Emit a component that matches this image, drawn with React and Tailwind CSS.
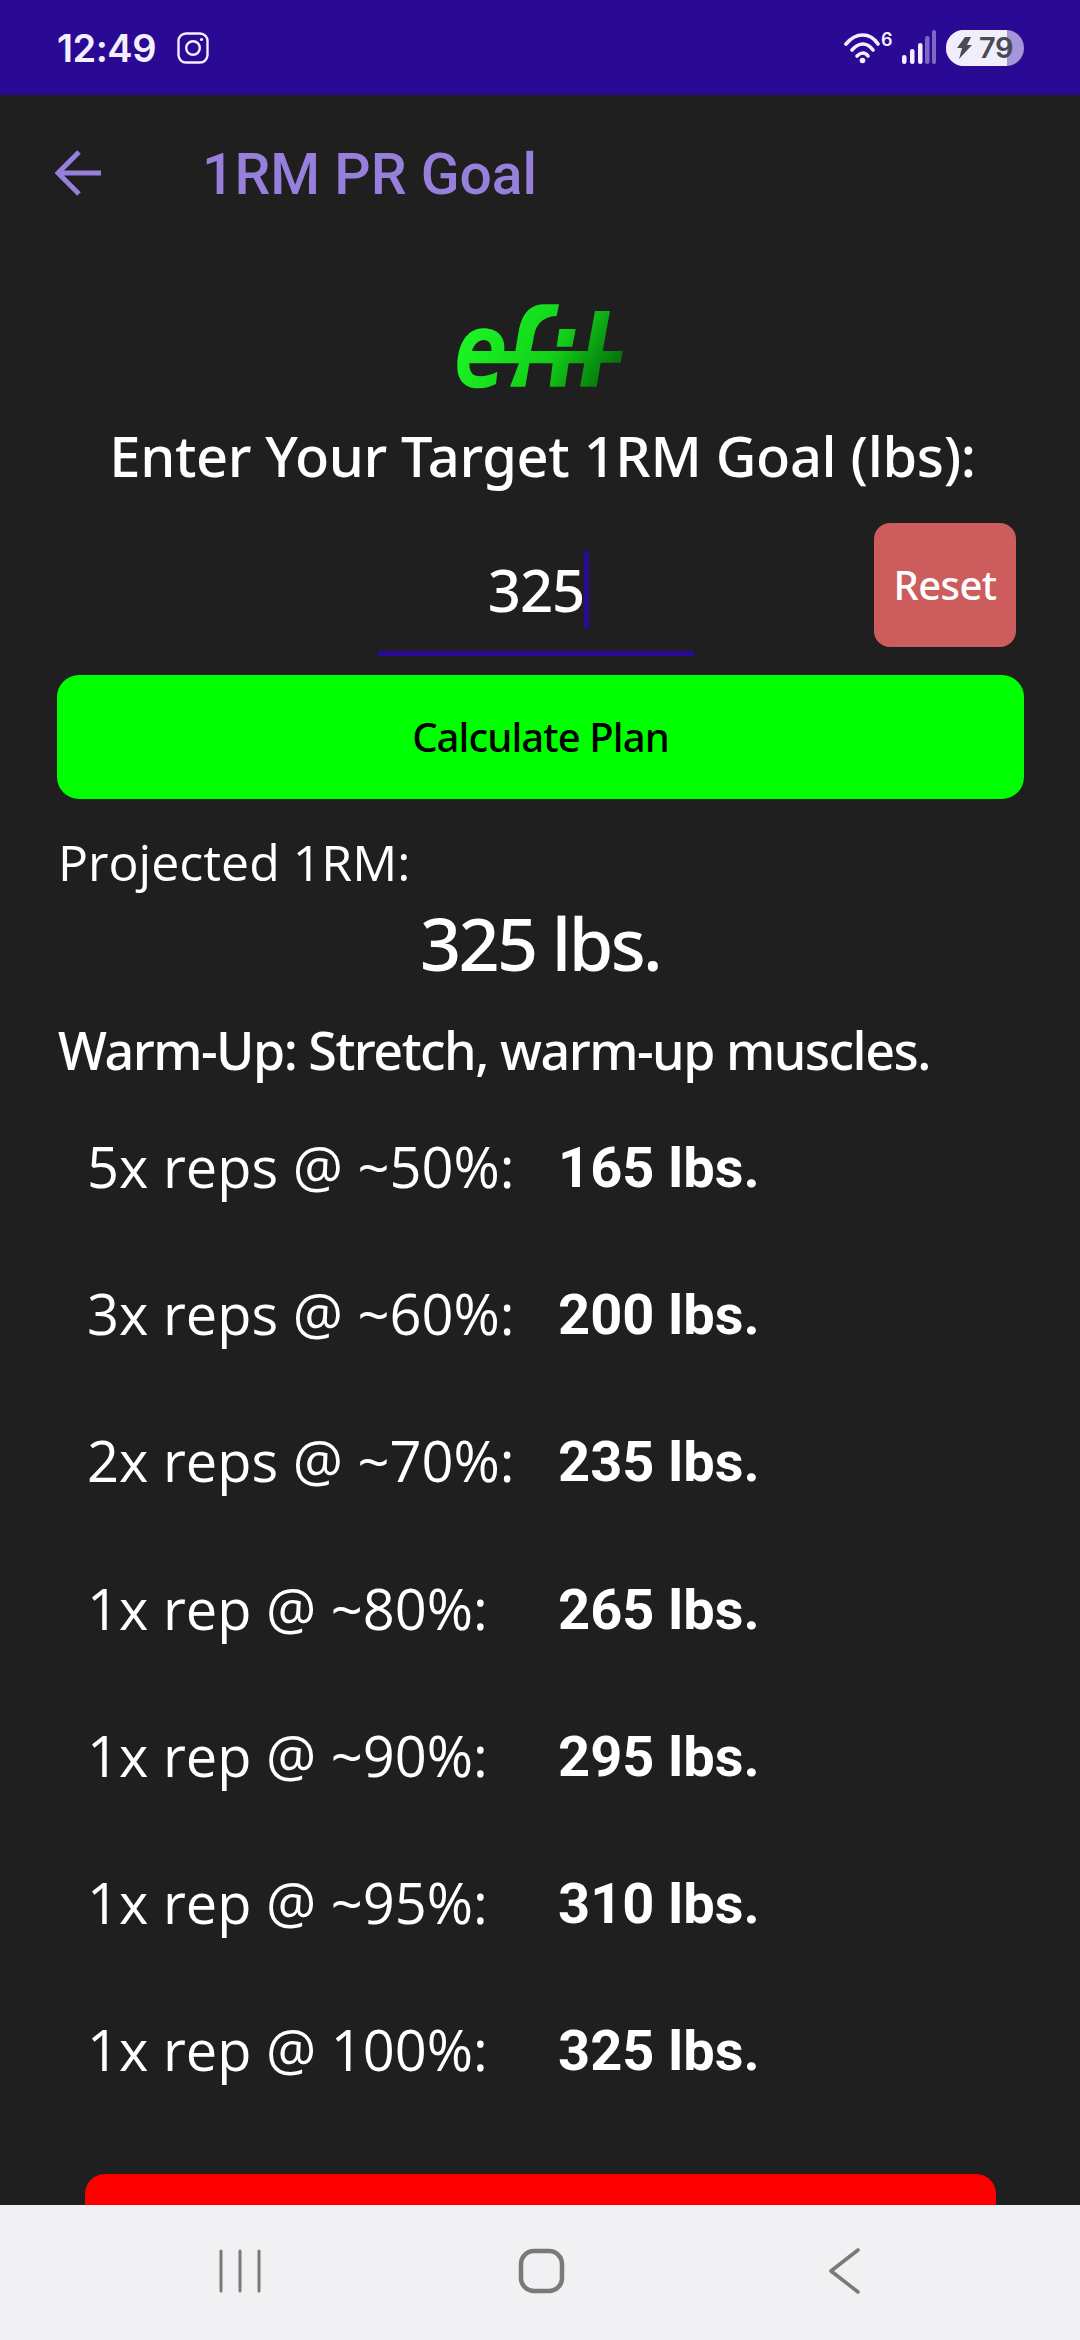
import React from 'react';

const sans = "font-['Open_Sans',sans-serif]";
const medium = "font-['Noto_Sans',sans-serif] font-medium";

const rows = [
  ['5x reps @ ~50%:', '165 lbs.'],
  ['3x reps @ ~60%:', '200 lbs.'],
  ['2x reps @ ~70%:', '235 lbs.'],
  ['1x rep @ ~80%:', '265 lbs.'],
  ['1x rep @ ~90%:', '295 lbs.'],
  ['1x rep @ ~95%:', '310 lbs.'],
  ['1x rep @ 100%:', '325 lbs.'],
];

const StatusBar = () => (
  <div className="h-[95px] shrink-0 bg-[#2a0a94] flex items-center justify-between pl-[57px] pr-[56px] text-[#f3effc]">
    <div className="flex items-center gap-[21px]">
      <span className="font-['Inter',sans-serif] font-semibold text-[38px] leading-none tracking-[-0.5px]">12:49</span>
      <svg width="32" height="32" viewBox="0 0 32 32" fill="none" stroke="currentColor" strokeWidth="2.4">
        <rect x="1.5" y="1.5" width="29" height="29" rx="7.5" />
        <circle cx="16" cy="16" r="6.8" />
        <circle cx="24.5" cy="7.5" r="1.6" fill="currentColor" stroke="none" />
      </svg>
    </div>
    <div className="flex items-center">
      <div className="relative w-[48px] h-[32px]">
        <svg width="36" height="32" viewBox="0 0 36 32" fill="none" stroke="currentColor" strokeWidth="3.6" strokeLinecap="round">
          <path d="M2 12 C12 0, 26 0, 34 12" />
          <path d="M8 18 C15 10, 23 10, 29 18" />
          <path d="M13 24 C17 20, 21 20, 24 24" />
          <circle cx="18.500" cy="28.500" r="2.800" fill="currentColor" stroke="none" />
        </svg>
        <span className="absolute left-[37px] top-[-1px] font-['Inter',sans-serif] font-semibold text-[18px] leading-[18px]">6</span>
      </div>
      <svg className="ml-[10px]" width="34" height="36" viewBox="0 0 34 36">
        <rect x="0" y="25" width="4.500" height="9" rx="2.200" fill="#f3effc" />
        <rect x="8" y="19" width="4.500" height="15" rx="2.200" fill="#f3effc" />
        <rect x="16" y="13" width="4.500" height="21" rx="2.200" fill="#f3effc" />
        <rect x="23" y="6" width="4.500" height="28" rx="2.200" fill="#7f68c4" />
        <rect x="30" y="0" width="4" height="34" rx="2" fill="#7f68c4" />
      </svg>
      <div className="ml-[10px] relative w-[78px] h-[36px] rounded-full overflow-hidden bg-[#a596d8]">
        <div className="absolute inset-y-0 left-0 w-[61px] bg-[#f1eefb]" />
        <div className="absolute inset-0 flex items-center pl-[10px] text-[#4a4a55]">
          <svg width="16" height="24" viewBox="0 0 16 24" fill="currentColor">
            <path d="M9 1 L15 1 L11 9 L16 9 L3 23 L6 12 L1 12 Z" />
          </svg>
          <span className="ml-[7px] font-['Inter',sans-serif] font-semibold text-[29px] leading-none tracking-[-0.5px]">79</span>
        </div>
      </div>
    </div>
  </div>
);

const Logo = () => (
  <svg width="280" height="130" viewBox="0 0 840 390">
    <defs>
      <linearGradient id="efit" x1="240" y1="90" x2="640" y2="340" gradientUnits="userSpaceOnUse">
        <stop offset="0" stopColor="#1df524" />
        <stop offset="0.55" stopColor="#11cf18" />
        <stop offset="1" stopColor="#045f08" />
      </linearGradient>
    </defs>
    <path
      fill="url(#efit)"
      d="M292 275 C270 287 240 292 224 286 C212 281 208 266 208 250 L357 250 L330 320 L376 320 L388 250 L458 250 L449 320 L495 320 L506 250 L553 250 L540 320 L590 320 L602 248 L662 248 L668 213 L608 213 L630 93 L585 93 L563 213 L512 213 L470 213 L393 213 L400 180 C406 140 418 112 470 108 L477 73 L428 73 C385 76 365 105 355 160 L346 213 L312 213 C318 180 300 145 250 145 C200 145 172 195 172 260 C172 305 200 326 235 325 C255 325 272 320 288 312 Z M216 213 C222 192 236 180 252 180 C268 180 276 195 274 213 Z"
    />
    <path fill="url(#efit)" d="M478 147 L527 147 L517 200 L470 200 Z" />
  </svg>
);

const NavBar = () => (
  <div className="h-[135px] shrink-0 bg-[#f1f1f4] flex items-start pt-[43px] text-[#7a7a7a]">
    <div className="w-full relative h-[48px]">
      <svg className="absolute left-[218px] top-0" width="44" height="46" viewBox="0 0 44 46" fill="none" stroke="currentColor" strokeWidth="3" strokeLinecap="round">
        <path d="M3 3 V43 M22 3 V43 M41 3 V43" />
      </svg>
      <svg className="absolute left-[518px] top-0" width="48" height="46" viewBox="0 0 48 46" fill="none" stroke="currentColor" strokeWidth="4.500">
        <rect x="3" y="3" width="41" height="40" rx="13" />
      </svg>
      <svg className="absolute left-[828px] top-0" width="34" height="46" viewBox="0 0 34 46" fill="none" stroke="currentColor" strokeWidth="3.600" strokeLinecap="round" strokeLinejoin="round">
        <path d="M30 2 L3 23 L30 44" />
      </svg>
    </div>
  </div>
);

export default function App() {
  return (
    <div className={`w-[1080px] h-[2340px] flex flex-col overflow-hidden bg-[#1f1f1f] text-white ${sans}`}>
      <StatusBar />
      <div className="flex-1 overflow-hidden">
        <header className="h-[156px] flex items-center pl-[55px]">
          <svg width="46" height="46" viewBox="0 0 46 46" fill="none" stroke="#977fdc" strokeWidth="5">
            <path d="M46 23 H4 M24 2 L3 23 L24 44" />
          </svg>
          <h1 className="ml-[101px] pt-[2px] font-['Roboto',sans-serif] font-medium text-[57px] leading-none text-[#977fdc]">1RM PR Goal</h1>
        </header>
        <div className="mt-[29px] flex justify-center h-[130px]">
          <Logo />
        </div>
        <p className={`mt-[10px] pl-[5px] text-center text-[56px] leading-[70px] tracking-[-0.35px] ${medium}`}>Enter Your Target 1RM Goal (lbs):</p>
        <div className="mt-[33px] h-[133px] relative flex justify-center">
          <div className="w-[316px] h-[133px] ml-[-8px] border-b-[5px] border-[#2a0a94] flex items-center justify-center pt-[5px] pl-[5px]">
            <span className={`text-[58px] leading-none tracking-[-1px] ${medium}`}>325</span>
            <span className="w-[5px] h-[77px] bg-[#2a0a94]" />
          </div>
          <div className={`absolute right-[64px] top-0 w-[142px] h-[124px] rounded-[16px] bg-[#cd5c5c] flex items-center justify-center text-[40px] tracking-[-0.6px] ${medium}`}>Reset</div>
        </div>
        <div className={`ml-[57px] mr-[56px] mt-[19px] h-[124px] rounded-[22px] bg-[#00ff00] text-black text-[40px] tracking-[-0.9px] flex items-center justify-center ${medium}`}>Calculate Plan</div>
        <p className="mt-[33px] ml-[58px] text-[50px] leading-[60px]">Projected 1RM:</p>
        <p className={`mt-[6px] text-center text-[72px] leading-[90px] tracking-[-2.6px] ${medium}`}>325 lbs.</p>
        <p className={`mt-[28px] ml-[58px] text-[52px] leading-[68px] tracking-[-1.5px] ${medium}`}>Warm-Up: Stretch, warm-up muscles.</p>
        <div className="mt-[49px]">
          {rows.map(([label, value]) => (
            <div key={label} className="h-[147.200px] flex items-start pl-[87px]">
              <span className="w-[471px] -mt-[2px] text-[56px] leading-[70px]">{label}</span>
              <span className="font-['Roboto',sans-serif] font-bold text-[56px] leading-[70px]">{value}</span>
            </div>
          ))}
        </div>
        <div className="ml-[85px] mr-[84px] mt-[11px] h-[120px] rounded-[20px] bg-[#ff0000]" />
      </div>
      <NavBar />
    </div>
  );
}
